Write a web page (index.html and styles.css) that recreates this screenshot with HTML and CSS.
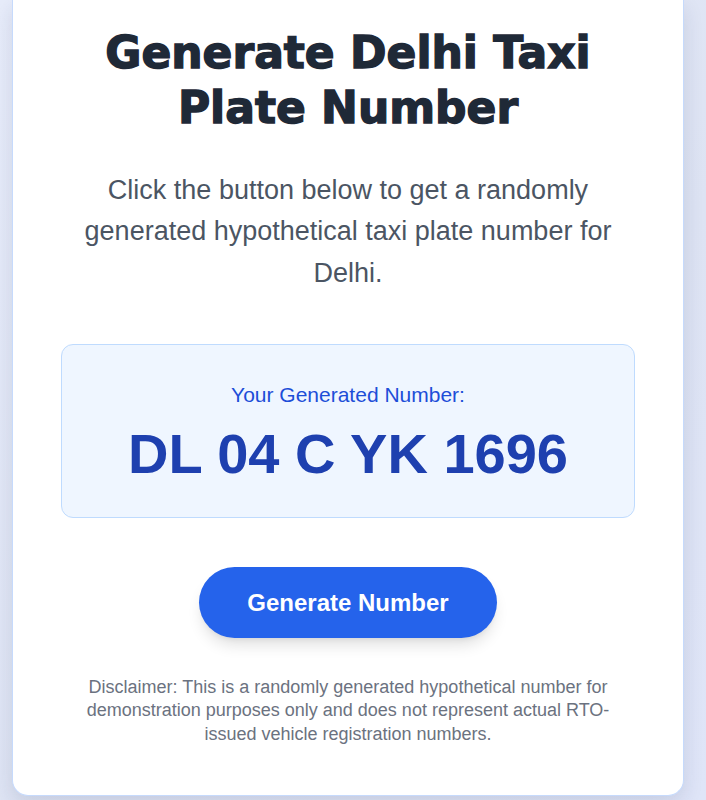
FILE: index.html
```html
<!DOCTYPE html>
<html lang="en">
<head>
<meta charset="utf-8">
<title>Generate Delhi Taxi Plate Number</title>
<link rel="stylesheet" href="styles.css">
</head>
<body>
  <main class="card">
    <h1 class="title">Generate Delhi Taxi Plate Number</h1>
    <p class="intro">Click the button below to get a randomly generated hypothetical taxi plate number for Delhi.</p>
    <section class="plate">
      <p class="plate-label">Your Generated Number:</p>
      <p class="plate-number">DL 04 C YK 1696</p>
    </section>
    <button class="generate-btn" type="button">Generate Number</button>
    <p class="disclaimer">Disclaimer: This is a randomly generated hypothetical number for demonstration purposes only and does not represent actual RTO-issued vehicle registration numbers.</p>
  </main>
</body>
</html>
```
FILE: styles.css
```css
* { box-sizing: border-box; }

body {
  margin: 0;
  padding: 0 22px 5px 12px;
  font-family: "Liberation Sans", Arial, sans-serif;
  background: linear-gradient(135deg, #e7ecfa 0%, #dde3f3 60%, #dfe5f8 100%);
  min-height: 800px;
}

.card {
  background: #ffffff;
  border: 1px solid #c6dafc;
  border-top: none;
  border-radius: 0 0 16px 16px;
  box-shadow: 0 8px 20px rgba(30, 41, 80, 0.12);
  padding: 25px 48px 49px 48px;
  display: flex;
  flex-direction: column;
  align-items: center;
  text-align: center;
}

.title {
  margin: 0;
  font-family: "DejaVu Sans", "Liberation Sans", sans-serif;
  font-size: 44px;
  line-height: 55px;
  font-weight: 700;
  color: #1f2937;
  -webkit-text-stroke: 1.4px #1f2937;
}

.intro {
  margin: 35px 0 0 0;
  font-size: 27px;
  line-height: 41.25px;
  color: #4b5563;
}

.plate {
  margin-top: 50px;
  align-self: stretch;
  background: #eff6ff;
  border: 1px solid #bfdbfe;
  border-radius: 12px;
  padding: 34px 24px 30px 24px;
}

.plate-label {
  margin: 0 0 9.5px 0;
  font-size: 21px;
  line-height: 31.5px;
  color: #1d4ed8;
}

.plate-number {
  margin: 0;
  font-size: 56px;
  line-height: 67px;
  font-weight: 700;
  color: #1e40af;
}

.generate-btn {
  margin-top: 49px;
  font-family: inherit;
  font-size: 24px;
  line-height: 29px;
  font-weight: 700;
  color: #ffffff;
  background: #2563eb;
  border: none;
  border-radius: 999px;
  padding: 21px 48px;
  box-shadow: 0 10px 15px -3px rgba(0, 0, 0, 0.12), 0 4px 6px -4px rgba(0, 0, 0, 0.1);
  cursor: pointer;
}

.disclaimer {
  margin: 38px 0 0 0;
  font-size: 18px;
  line-height: 23.5px;
  color: #6b7280;
}
```
